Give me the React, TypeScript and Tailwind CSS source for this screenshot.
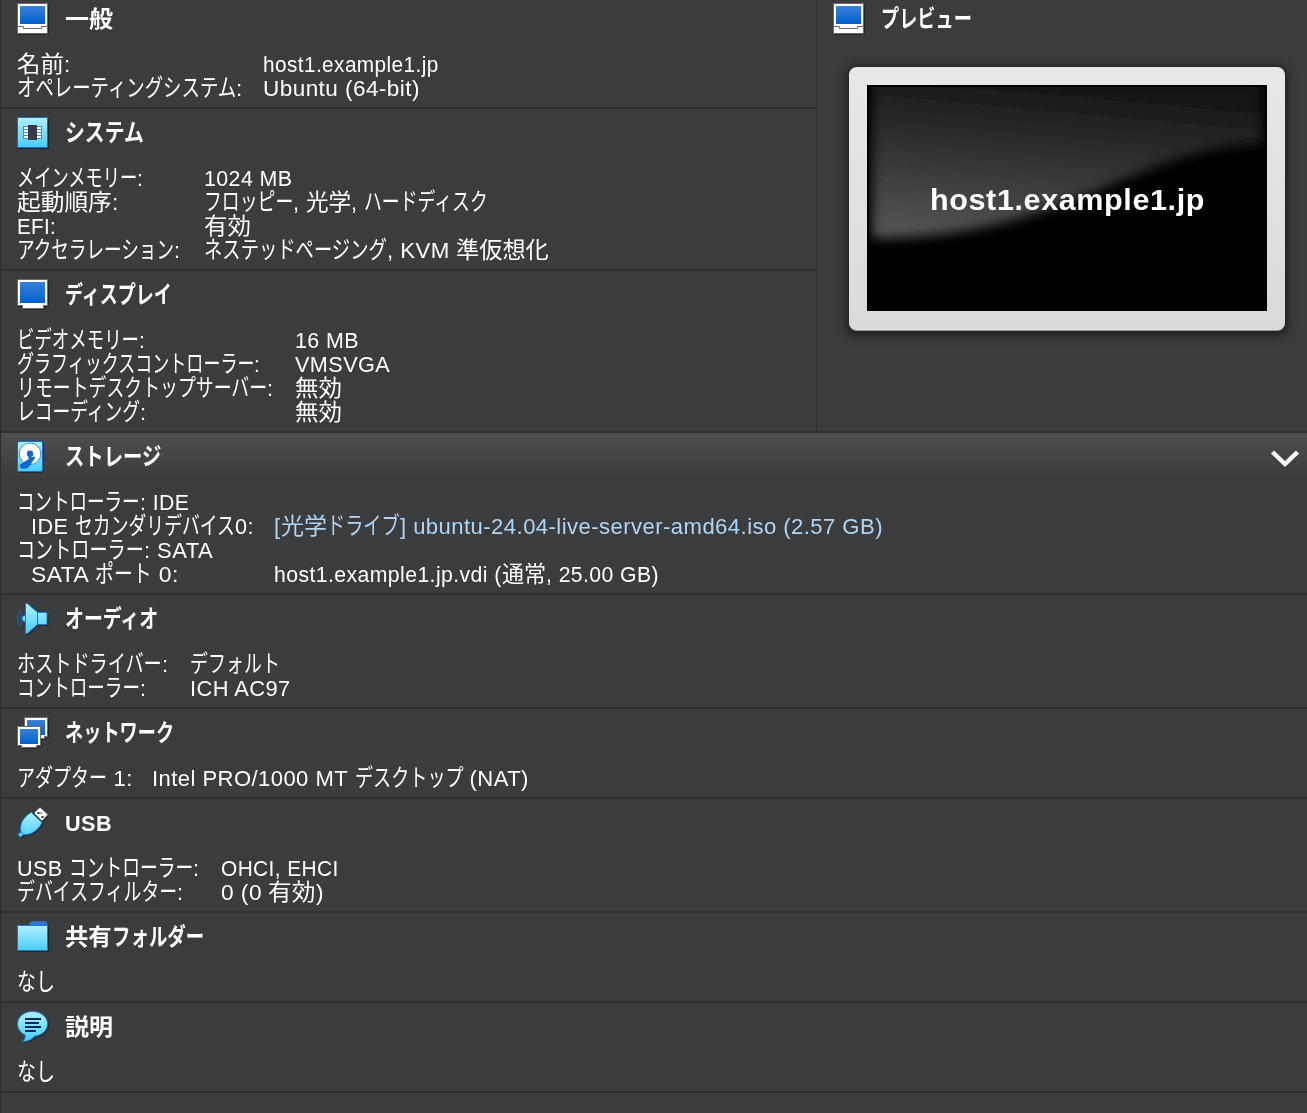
import { useLayoutEffect, useRef, type ReactNode } from "react";

const KANA = /[\u3040-\u30ff]/;
const HAN = /[\u4e00-\u9fff]/;
const kindOf = (c: string) => (KANA.test(c) ? "kana" : HAN.test(c) ? "han" : "latin");

const RUN_STYLE: Record<string, string> = {
  kana: "inline-block origin-left font-['Noto_Sans_CJK_JP',sans-serif] text-[1.06em]",
  han: "inline-block origin-left font-['Noto_Sans_CJK_JP',sans-serif]",
  latin: "inline-block origin-left font-['Liberation_Sans',sans-serif] text-[0.96em] tracking-[0.02em]",
};

function splitRuns(text: string) {
  const runs: { kind: string; text: string }[] = [];
  for (const c of text) {
    const kind = kindOf(c);
    const last = runs[runs.length - 1];
    if (last && last.kind === kind) last.text += c;
    else runs.push({ kind, text: c });
  }
  return runs;
}

// Sets text in a box of the given width, with narrow kana and full-width kanji.
function Text({ t, w, className = "" }: { t: string; w: number; className?: string }) {
  const ref = useRef<HTMLSpanElement>(null);
  const runs = splitRuns(t);
  useLayoutEffect(() => {
    const boxes = Array.from(ref.current!.children) as HTMLElement[];
    const inner = boxes.map((b) => b.firstElementChild as HTMLElement);
    const natural = inner.map((e) => e.offsetWidth);
    const wanted = natural.map((n, i) => n * (runs[i].kind === "kana" ? 0.745 : 1));
    const k = w / wanted.reduce((a, b) => a + b, 0);
    boxes.forEach((b, i) => {
      b.style.width = `${wanted[i] * k}px`;
      inner[i].style.transform = `scaleX(${(wanted[i] * k) / natural[i]})`;
    });
  }, [t, w]);
  return (
    <span ref={ref} className={`inline-flex whitespace-pre ${className}`}>
      {runs.map((r, i) => (
        <span key={i} className={r.kind === "latin" ? "block shrink-0 -translate-y-px" : "block shrink-0 -translate-y-0.5"}>
          <span className={RUN_STYLE[r.kind]}>{r.text}</span>
        </span>
      ))}
    </span>
  );
}

function Icon({ children }: { children: ReactNode }) {
  return (
    <svg width="32" height="32" viewBox="0 0 32 32" className="shrink-0 overflow-visible drop-shadow-[1px_1px_0_rgba(0,0,0,0.35)]">
      <defs>
        <linearGradient id="screen" x1="0" y1="0" x2="0" y2="1">
          <stop offset="0" stopColor="#3a80d8" />
          <stop offset="1" stopColor="#0060d0" />
        </linearGradient>
        <linearGradient id="sky" x1="0" y1="0" x2="0" y2="1">
          <stop offset="0" stopColor="#b0f0ff" />
          <stop offset="1" stopColor="#48ccff" />
        </linearGradient>
      </defs>
      {children}
    </svg>
  );
}

const MachineIcon = () => (
  <Icon>
    <path d="M.5.5h30v30H.5z" fill="#fff" stroke="#6b6b6b" />
    <path d="M3 3h25v18H3z" fill="url(#screen)" />
    <path d="M1 23.5h5.5v2h18v-2H30" fill="none" stroke="#6b6b6b" />
  </Icon>
);
const SystemIcon = () => (
  <Icon>
    <path d="M.5.5h30v30H.5z" fill="url(#sky)" stroke="#1a6ac8" />
    <path d="M6 9h19v13H6z" fill="#4a8ccc" />
    <path d="M7 10h17v2H7zM7 13h17v2H7zM7 16h17v2H7zM7 19h17v2H7z" fill="#fff" />
    <path d="M11 8h9v15h-9z" fill="#363b4a" />
  </Icon>
);
const DisplayIcon = () => (
  <Icon>
    <path d="M.5.5h30v26h-4v3h-21v-3h-5z" fill="#fff" stroke="#6b6b6b" />
    <path d="M3 3h25v21H3z" fill="url(#screen)" />
  </Icon>
);
const StorageIcon = () => (
  <Icon>
    <rect x=".5" y=".5" width="25" height="30" rx="1.5" fill="url(#sky)" stroke="#0d70d8" />
    <circle cx="13" cy="12.8" r="10.8" fill="#fff" stroke="#1c70c8" strokeWidth=".8" />
    <path d="M3 23.500 11 18.500 17 15.200l1.200 1.300L12 26l-2.500 1.500H4L3 26z" fill="#0e68cf" />
    <path d="M13 13v5" stroke="#0e68cf" strokeWidth="3" />
    <circle cx="13" cy="12.800" r="3.200" fill="#0e68cf" />
  </Icon>
);
const AudioIcon = () => (
  <Icon>
    <path d="M8.500.5h2L20.500 9.500h9.500v12h-9.500l-10 9h-2z" fill="url(#sky)" stroke="#1878d0" />
    <path d="M20.500 9.500v12" stroke="#1878d0" />
    <path d="M8 12.500a3 3 0 0 0 0 6" fill="#8fe2ff" stroke="#1878d0" />
    <path d="M5.800 9Q1.500 15.500 5.800 22M3.800 7Q-2.200 15.500 3.800 24" fill="none" stroke="#2273bd" />
  </Icon>
);
const NetworkIcon = () => (
  <Icon>
    <path d="M7.500.5h23v19h-3v2h-17v-2h-3z" fill="#fff" stroke="#6b6b6b" />
    <path d="M10 3h18v15H10z" fill="url(#screen)" />
    <path d="M.5 9.500h23v19h-4v2H4.500v-2h-4z" fill="#fff" stroke="#6b6b6b" />
    <path d="M3 12h18v15H3z" fill="url(#screen)" />
  </Icon>
);
const UsbIcon = () => (
  <Icon>
    <path d="M17 6 23 .2l8 7.300-6 6.500z" fill="#fff" stroke="#555" strokeWidth=".8" />
    <path d="M20.500 5h2v2h-2zM24.500 9h2v2h-2zM23.500 5.500h1.200v1.200h-1.200z" fill="#222" />
    <path d="M.8 27.500 4 24.700C2.800 19 4.500 14 8 10.500c2.500-2.800 4.500-4.500 6.500-5l10.500 10c-1.300 3.500-4.500 7.500-9.500 10.300-2.500 1.400-5.500 2-9.300 1.900l-2.700 2.500z" fill="url(#sky)" stroke="#1878d0" />
    <path d="m4 24.700 2.200 3" stroke="#1878d0" />
  </Icon>
);
const FolderIcon = () => (
  <Icon>
    <path d="M11 6 14.500.2H29L30.800 3v5H11z" fill="#2a70d0" />
    <path d="M.5 4.500h30v25H.5z" fill="url(#sky)" stroke="#1c76cc" />
    <path d="M11 4.500 14.500.5H29l1.500 4z" fill="#2f74d4" />
  </Icon>
);
const DescriptionIcon = () => (
  <Icon>
    <path d="M15.500.5c8.500 0 15 5.300 15 12.300 0 6.500-5 11.500-13 12.500-3 3.700-7 5.200-12 5.200 2.500-2 3-4 2.500-6.500C3.500 22 .5 18 .5 12.800.5 5.800 7 .5 15.500.5z" fill="url(#sky)" stroke="#1c76cc" />
    <path d="M8 8h16M8 12h14M8 16h16M8 20h11" stroke="#06245e" strokeWidth="2" />
  </Icon>
);

type Row = {
  label: string;
  lw: number;
  value?: string;
  vw?: number;
  indent?: boolean;
  link?: boolean;
};

function Heading({ icon, title, tw }: { icon: ReactNode; title: string; tw: number }) {
  return (
    <div className="flex h-[57px] items-start pt-2">
      {icon}
      <h2 className="ml-4 h-8 text-[23px] leading-[32px] font-bold">
        <Text t={title} w={tw} />
      </h2>
    </div>
  );
}

function Section({
  icon,
  title,
  tw,
  rows,
  col = "w-[246px]",
  className = "",
  action,
}: {
  icon: ReactNode;
  title: string;
  tw: number;
  rows: Row[];
  col?: string;
  className?: string;
  action?: ReactNode;
}) {
  return (
    <section className={`border-b-2 border-[#2f3031] pb-[7px] pl-4 ${className}`}>
      <div className="flex justify-between">
        <Heading icon={icon} title={title} tw={tw} />
        {action}
      </div>
      {rows.map((r) => (
        <div key={r.label} className="flex h-6 text-[23px] leading-6">
          <div className={r.indent ? `shrink-0 pl-[14px] ${col}` : `shrink-0 ${col}`}>
            <Text t={r.label} w={r.lw} />
          </div>
          {r.value && <Text t={r.value} w={r.vw!} className={r.link ? "text-[#b0d5f5]" : ""} />}
        </div>
      ))}
    </section>
  );
}

function Preview() {
  return (
    <aside className="grow border-b-2 border-l border-[#2f3031] pl-4">
      <div className="-mt-[5px]">
        <Heading icon={<MachineIcon />} title="プレビュー" tw={91} />
      </div>
      <div className="mt-[15px] ml-4 h-[264px] w-[436px] rounded-lg border-b border-[#999] bg-linear-to-b from-[#e8e8e8] to-[#dadada] p-[18px] shadow-[0_2px_10px_3px_rgba(0,0,0,0.5)]">
        <div className="relative h-[226px] w-[400px] overflow-hidden bg-black">
          <svg width="400" height="226" className="absolute inset-0">
            <defs>
              <linearGradient id="gloss" x1="0.12" y1="1" x2="0.35" y2="0">
                <stop offset="0" stopColor="#565656" />
                <stop offset="0.5" stopColor="#343434" />
                <stop offset="1" stopColor="#161616" />
              </linearGradient>
              <filter id="soft" x="-10%" y="-10%" width="120%" height="120%">
                <feGaussianBlur stdDeviation="6" />
              </filter>
            </defs>
            <path d="M5-4H395V59C270 60 205 153 5 153z" fill="url(#gloss)" filter="url(#soft)" />
            <path d="M1 226V1H399V226" fill="none" stroke="#000" strokeWidth="2" />
          </svg>
          <div className="relative flex h-full items-center justify-center pt-[3px] text-[31px] font-bold">
            <Text t="host1.example1.jp" w={275} />
          </div>
        </div>
      </div>
    </aside>
  );
}

export default function App() {
  return (
    <main className="flex h-[1113px] w-[1307px] flex-col overflow-hidden border-l border-[#2c2d2e] bg-[#3b3c3d] text-white">
      <div className="flex h-[433px] shrink-0">
        <div className="w-[815px] shrink-0">
          <Section
            className="-mt-[5px]"
            icon={<MachineIcon />}
            title="一般"
            tw={48}
            rows={[
              { label: "名前:", lw: 54, value: "host1.example1.jp", vw: 176 },
              { label: "オペレーティングシステム:", lw: 226, value: "Ubuntu (64-bit)", vw: 157 },
            ]}
          />
          <Section
            icon={<SystemIcon />}
            title="システム"
            tw={79}
            col="w-[187px]"
            rows={[
              { label: "メインメモリー:", lw: 127, value: "1024 MB", vw: 88 },
              { label: "起動順序:", lw: 102, value: "フロッピー, 光学, ハードディスク", vw: 284 },
              { label: "EFI:", lw: 39, value: "有効", vw: 47 },
              { label: "アクセラレーション:", lw: 164, value: "ネステッドページング, KVM 準仮想化", vw: 345 },
            ]}
          />
          <Section
            icon={<DisplayIcon />}
            title="ディスプレイ"
            tw={107}
            col="w-[278px]"
            rows={[
              { label: "ビデオメモリー:", lw: 129, value: "16 MB", vw: 64 },
              { label: "グラフィックスコントローラー:", lw: 244, value: "VMSVGA", vw: 95 },
              { label: "リモートデスクトップサーバー:", lw: 257, value: "無効", vw: 47 },
              { label: "レコーディング:", lw: 130, value: "無効", vw: 47 },
            ]}
          />
        </div>
        <Preview />
      </div>
      <Section
        className="bg-linear-to-b from-[#4d4e4f] to-[#3b3c3d] to-[44px]"
        icon={<StorageIcon />}
        title="ストレージ"
        tw={96}
        col="w-[257px]"
        action={
          <svg width="30" height="22" viewBox="0 0 30 22" className="mt-[15px] mr-[7px]">
            <path d="m2.500 4 12.500 12L27.500 4" fill="none" stroke="#fff" strokeWidth="4.500" />
          </svg>
        }
        rows={[
          { label: "コントローラー: IDE", lw: 172 },
          {
            label: "IDE セカンダリデバイス0:",
            lw: 223,
            value: "[光学ドライブ] ubuntu-24.04-live-server-amd64.iso (2.57 GB)",
            vw: 609,
            indent: true,
            link: true,
          },
          { label: "コントローラー: SATA", lw: 196 },
          {
            label: "SATA ポート 0:",
            lw: 148,
            value: "host1.example1.jp.vdi (通常, 25.00 GB)",
            vw: 385,
            indent: true,
          },
        ]}
      />
      <Section
        icon={<AudioIcon />}
        title="オーディオ"
        tw={93}
        col="w-[173px]"
        rows={[
          { label: "ホストドライバー:", lw: 152, value: "デフォルト", vw: 90 },
          { label: "コントローラー:", lw: 130, value: "ICH AC97", vw: 101 },
        ]}
      />
      <Section
        icon={<NetworkIcon />}
        title="ネットワーク"
        tw={109}
        col="w-[135px]"
        rows={[{ label: "アダプター 1:", lw: 116, value: "Intel PRO/1000 MT デスクトップ (NAT)", vw: 377 }]}
      />
      <Section
        icon={<UsbIcon />}
        title="USB"
        tw={47}
        col="w-[204px]"
        rows={[
          { label: "USB コントローラー:", lw: 183, value: "OHCI, EHCI", vw: 118 },
          { label: "デバイスフィルター:", lw: 167, value: "0 (0 有効)", vw: 103 },
        ]}
      />
      <Section icon={<FolderIcon />} title="共有フォルダー" tw={139} rows={[{ label: "なし", lw: 38 }]} />
      <Section icon={<DescriptionIcon />} title="説明" tw={48} rows={[{ label: "なし", lw: 38 }]} />
    </main>
  );
}
